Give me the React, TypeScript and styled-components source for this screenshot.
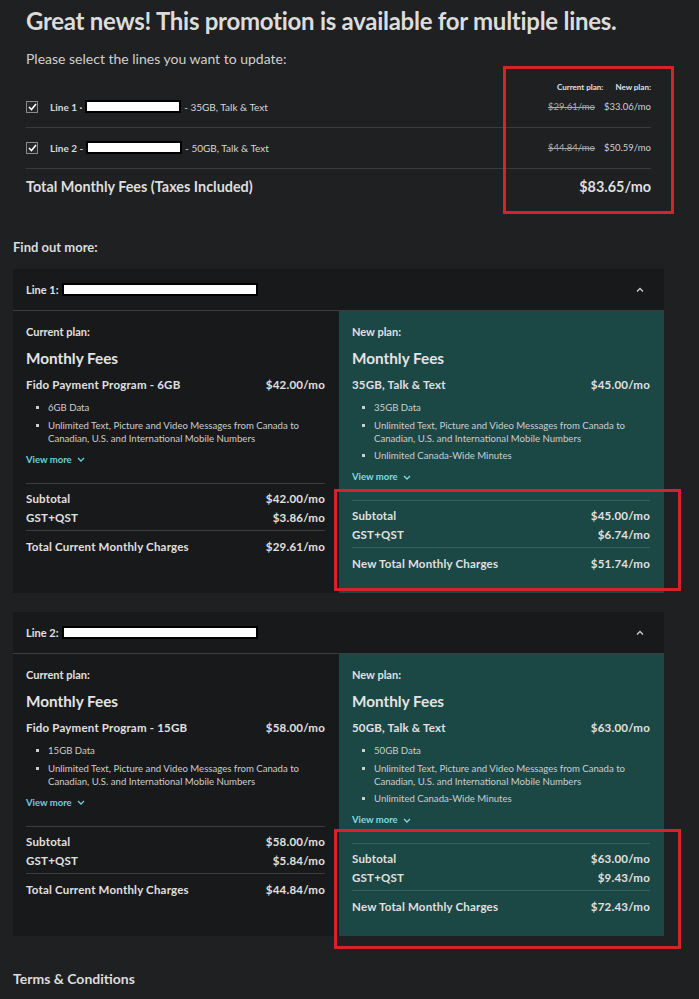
import React from 'react';
import styled, { createGlobalStyle } from 'styled-components';

const GlobalStyle = createGlobalStyle`
  body {
    margin: 0;
    background: #1f2022;
    font-family: 'Lato', 'Noto Sans', sans-serif;
    color: #d6d6d6;
  }
`;

const Page = styled.div`
  position: relative;
  width: 651px;
  margin-left: 13px;
  padding-top: 6px;
  padding-bottom: 20px;
`;

const TopSection = styled.section`
  padding: 0 13px;
`;

const Title = styled.h1`
  margin: 0;
  font-size: 24px;
  line-height: 30px;
  font-weight: 700;
  color: #dcdcdc;
  letter-spacing: -0.27px;
`;

const Subtitle = styled.p`
  margin: 14px 0 0;
  font-size: 14px;
  line-height: 18px;
  color: #cfcfcf;
`;

const PlanHeader = styled.div`
  display: flex;
  justify-content: flex-end;
  gap: 12px;
  margin-top: 13px;
  margin-bottom: -6px;
  font-size: 8px;
  line-height: 12px;
  font-weight: 700;
  color: #e0e0e0;
`;

const LineRow = styled.div`
  display: flex;
  align-items: center;
  padding: 13px 0 14px;
  border-bottom: 1px solid #3a3b3d;
  font-size: 10px;
  line-height: 12px;
`;

const Check = styled.span`
  width: 10px;
  height: 10px;
  border: 1px solid #8a8a8a;
  background: #26272a;
  display: flex;
  align-items: center;
  justify-content: center;
  margin-right: 12px;
`;

const LineLabel = styled.span`
  display: flex;
  align-items: center;
  color: #d8d8d8;
  flex: 1;
`;

const Bold = styled.span`
  font-weight: 700;
`;

const Redacted = styled.span<{ $w: number }>`
  display: inline-block;
  width: ${p => p.$w}px;
  height: 9px;
  background: #ffffff;
  border: 2px solid #000;
  margin: 0 3px;
`;

const Prices = styled.span`
  display: flex;
  gap: 9px;
  font-size: 9.5px;
`;

const OldPrice = styled.span`
  text-decoration: line-through;
  color: #a9a9a9;
`;

const NewPrice = styled.span`
  color: #cfcfcf;
`;

const TotalRow = styled.div`
  display: flex;
  justify-content: space-between;
  padding-top: 9px;
  font-size: 14.4px;
  line-height: 18px;
  font-weight: 700;
  color: #dedede;
`;

const SectionTitle = styled.h2`
  margin: 43px 0 14px;
  font-size: 13px;
  line-height: 16px;
  font-weight: 700;
  color: #dcdcdc;
`;

const Card = styled.section`
  background: #18191b;
  margin-bottom: 19px;
`;

const CardHeader = styled.div`
  height: 41px;
  display: flex;
  align-items: center;
  justify-content: space-between;
  padding: 0 20px 0 13px;
  border-bottom: 1px solid #3b3d3f;
  font-size: 11px;
  font-weight: 700;
  color: #e2e2e2;
`;

const HeaderLabel = styled.span`
  display: flex;
  align-items: center;
`;

const CardBody = styled.div`
  display: grid;
  grid-template-columns: 326px 325px;
`;

const Column = styled.div<{ $new?: boolean }>`
  background: ${p => (p.$new ? '#1b4745' : 'transparent')};
  padding: 14px 14px 22px 13px;
  display: flex;
  flex-direction: column;
`;

const PlanLabel = styled.div`
  font-size: 11px;
  line-height: 14px;
  font-weight: 700;
  color: #e0e0e0;
`;

const FeesTitle = styled.div`
  margin-top: 9px;
  font-size: 15.3px;
  line-height: 20px;
  font-weight: 700;
  color: #e4e4e4;
`;

const ItemRow = styled.div`
  display: flex;
  justify-content: space-between;
  margin-top: 10px;
  font-size: 11.5px;
  line-height: 14px;
  font-weight: 700;
  letter-spacing: 0.2px;
  color: #e0e0e0;
`;

const Bullets = styled.ul`
  list-style: none;
  margin: 9px 0 0;
  padding: 0;
  display: flex;
  flex-direction: column;
  gap: 4.5px;
`;

const Bullet = styled.li`
  position: relative;
  padding-left: 22px;
  font-size: 9.6px;
  line-height: 13px;
  color: #cdcdcd;
  &::before {
    content: '';
    position: absolute;
    left: 10px;
    top: 5px;
    width: 3px;
    height: 3px;
    background: #cdcdcd;
  }
`;

const ViewMore = styled.div<{ $new?: boolean }>`
  display: flex;
  align-items: center;
  gap: 5px;
  margin-top: 9px;
  font-size: 9.5px;
  line-height: 12px;
  font-weight: 700;
  color: ${p => (p.$new ? '#7fdbe0' : '#6cd0d8')};
`;

const Summary = styled.div<{ $new?: boolean }>`
  margin-top: 17px;
  border-top: 1px solid ${p => (p.$new ? '#336260' : '#3b3d3f')};
  padding-top: 8px;
`;

const SumRow = styled.div`
  display: flex;
  justify-content: space-between;
  font-size: 11.5px;
  line-height: 14px;
  font-weight: 700;
  letter-spacing: 0.2px;
  color: #e0e0e0;
  & + & {
    margin-top: 5px;
  }
`;

const TotalLine = styled(SumRow)<{ $new?: boolean }>`
  && {
    margin-top: 5px;
  }
  border-top: 1px solid ${p => (p.$new ? '#336260' : '#3b3d3f')};
  padding-top: 9px;
`;

const Terms = styled.h2`
  margin: 34px 0 0;
  font-size: 14px;
  line-height: 18px;
  font-weight: 700;
  color: #dcdcdc;
`;

const Highlight = styled.div<{ $x: number; $y: number; $w: number; $h: number }>`
  position: absolute;
  left: ${p => p.$x - 13}px;
  top: ${p => p.$y}px;
  width: ${p => p.$w}px;
  height: ${p => p.$h}px;
  border: 3px solid #d5232c;
  box-sizing: border-box;
  pointer-events: none;
`;

const CheckMark = () => (
  <svg width="9" height="8" viewBox="0 0 9 8">
    <polyline points="1,4 3.5,6.5 8,1" fill="none" stroke="#fff" strokeWidth="1.6" />
  </svg>
);

const Chevron = ({ up, color }: { up?: boolean; color: string }) => (
  <svg width="8" height="5" viewBox="0 0 8 5">
    <polyline
      points={up ? '1,4.5 4,1.5 7,4.5' : '1,1 4,4 7,1'}
      fill="none"
      stroke={color}
      strokeWidth="1.3"
    />
  </svg>
);

type Plan = {
  name: string;
  price: string;
  bullets: string[][];
  subtotal: string;
  tax: string;
  total: string;
};

const messaging = [
  'Unlimited Text, Picture and Video Messages from Canada to',
  'Canadian, U.S. and International Mobile Numbers',
];

const lines: { id: number; current: Plan; next: Plan }[] = [
  {
    id: 1,
    current: {
      name: 'Fido Payment Program - 6GB',
      price: '$42.00/mo',
      bullets: [['6GB Data'], messaging],
      subtotal: '$42.00/mo',
      tax: '$3.86/mo',
      total: '$29.61/mo',
    },
    next: {
      name: '35GB, Talk & Text',
      price: '$45.00/mo',
      bullets: [['35GB Data'], messaging, ['Unlimited Canada-Wide Minutes']],
      subtotal: '$45.00/mo',
      tax: '$6.74/mo',
      total: '$51.74/mo',
    },
  },
  {
    id: 2,
    current: {
      name: 'Fido Payment Program - 15GB',
      price: '$58.00/mo',
      bullets: [['15GB Data'], messaging],
      subtotal: '$58.00/mo',
      tax: '$5.84/mo',
      total: '$44.84/mo',
    },
    next: {
      name: '50GB, Talk & Text',
      price: '$63.00/mo',
      bullets: [['50GB Data'], messaging, ['Unlimited Canada-Wide Minutes']],
      subtotal: '$63.00/mo',
      tax: '$9.43/mo',
      total: '$72.43/mo',
    },
  },
];

const PlanColumn = ({ plan, isNew }: { plan: Plan; isNew?: boolean }) => (
  <Column $new={isNew}>
    <PlanLabel>{isNew ? 'New plan:' : 'Current plan:'}</PlanLabel>
    <FeesTitle>Monthly Fees</FeesTitle>
    <ItemRow>
      <span>{plan.name}</span>
      <span>{plan.price}</span>
    </ItemRow>
    <Bullets>
      {plan.bullets.map((b, i) => (
        <Bullet key={i}>
          {b.map((t, j) => (
            <React.Fragment key={j}>
              {j > 0 && <br />}
              {t}
            </React.Fragment>
          ))}
        </Bullet>
      ))}
    </Bullets>
    <ViewMore $new={isNew}>
      View more <Chevron color={isNew ? '#7fdbe0' : '#6cd0d8'} />
    </ViewMore>
    <Summary $new={isNew}>
      <SumRow>
        <span>Subtotal</span>
        <span>{plan.subtotal}</span>
      </SumRow>
      <SumRow>
        <span>GST+QST</span>
        <span>{plan.tax}</span>
      </SumRow>
      <TotalLine $new={isNew}>
        <span>{isNew ? 'New Total Monthly Charges' : 'Total Current Monthly Charges'}</span>
        <span>{plan.total}</span>
      </TotalLine>
    </Summary>
  </Column>
);

const App = () => {
  return (
    <>
      <GlobalStyle />
      <Page>
        <TopSection>
          <Title>Great news! This promotion is available for multiple lines.</Title>
          <Subtitle>Please select the lines you want to update:</Subtitle>
          <PlanHeader>
            <span>Current plan:</span>
            <span>New plan:</span>
          </PlanHeader>
          <LineRow>
            <Check><CheckMark /></Check>
            <LineLabel>
              <Bold>Line 1 ·</Bold>
              <Redacted $w={92} />
              <span>- 35GB, Talk &amp; Text</span>
            </LineLabel>
            <Prices>
              <OldPrice>$29.61/mo</OldPrice>
              <NewPrice>$33.06/mo</NewPrice>
            </Prices>
          </LineRow>
          <LineRow>
            <Check><CheckMark /></Check>
            <LineLabel>
              <Bold>Line 2 -</Bold>
              <Redacted $w={92} />
              <span>- 50GB, Talk &amp; Text</span>
            </LineLabel>
            <Prices>
              <OldPrice>$44.84/mo</OldPrice>
              <NewPrice>$50.59/mo</NewPrice>
            </Prices>
          </LineRow>
          <TotalRow>
            <span>Total Monthly Fees (Taxes Included)</span>
            <span>$83.65/mo</span>
          </TotalRow>
        </TopSection>

        <SectionTitle>Find out more:</SectionTitle>

        {lines.map(line => (
          <Card key={line.id}>
            <CardHeader>
              <HeaderLabel>
                Line {line.id}:
                <Redacted $w={192} />
              </HeaderLabel>
              <Chevron up color="#d0d0d0" />
            </CardHeader>
            <CardBody>
              <PlanColumn plan={line.current} />
              <PlanColumn plan={line.next} isNew />
            </CardBody>
          </Card>
        ))}

        <Terms>Terms &amp; Conditions</Terms>

        <Highlight $x={503} $y={66} $w={171} $h={148} />
        <Highlight $x={334} $y={489} $w={347} $h={102} />
        <Highlight $x={334} $y={829} $w={347} $h={120} />
      </Page>
    </>
  );
};

export default App;
